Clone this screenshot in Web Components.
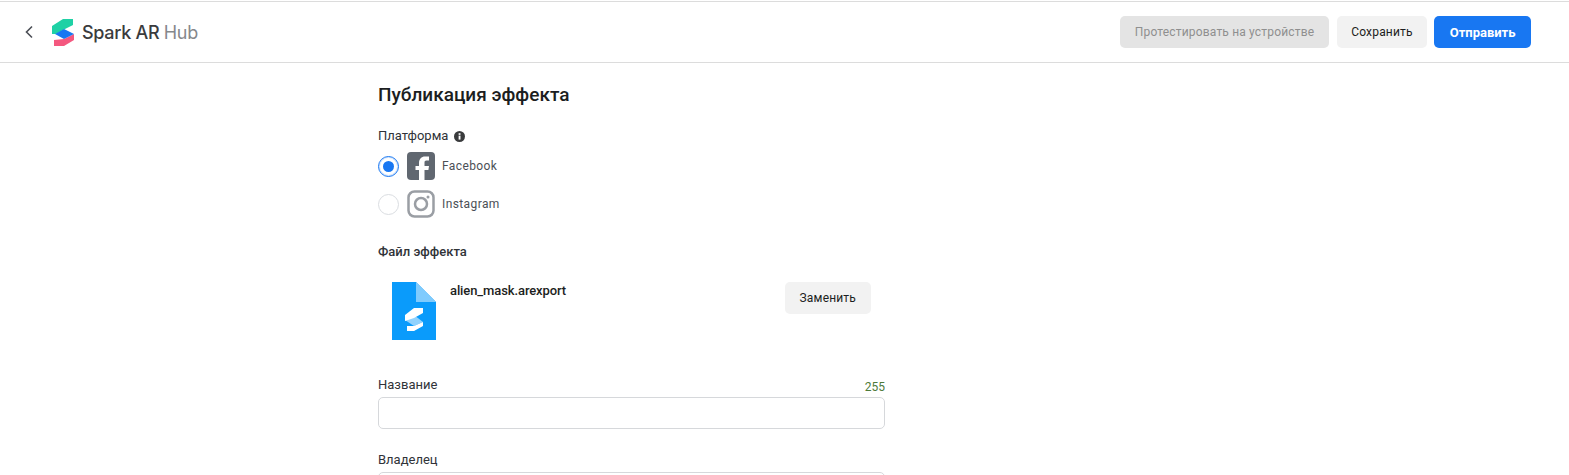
<!DOCTYPE html>
<html lang="ru">
<head>
<meta charset="utf-8">
<title>Spark AR Hub</title>
<style>
  html, body { margin: 0; height: 475px; overflow: hidden; background: #fff; }
  body { font-family: Roboto, "Liberation Sans", sans-serif; color: #1c1e21; }
</style>
</head>
<body>
<hub-header></hub-header>
<publish-form></publish-form>

<script>
// Small button used in the header and in the file row
class HubButton extends HTMLElement {
    constructor() {
        super();
        this.attachShadow({ mode: 'open' });
        this.shadowRoot.innerHTML = `
            <style>
                :host {
                    display: inline-flex;
                    align-items: center;
                    justify-content: center;
                    height: 32px;
                    padding: 0 14.5px;
                    border-radius: 5px;
                    background: #f2f2f2;
                    color: #1c1e21;
                    font-size: 12px;
                    letter-spacing: 0.17px;
                    white-space: nowrap;
                }
                :host([kind="disabled"]) { background: #e4e4e4; color: #8f8f8f; }
                :host([kind="primary"]) { background: #1877f2; color: #fff; font-weight: 700; font-size: 13px; letter-spacing: 0; padding: 0 15.5px; }
            </style>
            <slot></slot>
        `;
    }
}
customElements.define('hub-button', HubButton);

// Top bar with back arrow, logo and actions
class HubHeader extends HTMLElement {
    constructor() {
        super();
        this.attachShadow({ mode: 'open' });
        this.shadowRoot.innerHTML = `
            <style>
                :host {
                    display: flex;
                    align-items: center;
                    box-sizing: border-box;
                    height: 62px;
                    margin-top: 1px;
                    padding: 0 38px 0 24px;
                    border-top: 1px solid #dcdcdc;
                    border-bottom: 1px solid #dcdcdc;
                }
                .brand { display: flex; align-items: center; flex: 1; }
                .back { margin-right: 18px; }
                .logo { margin-right: 8px; }
                .name { font-family: Inter, Roboto, sans-serif; font-size: 18px; font-weight: 500; color: #3a3b3d; letter-spacing: -0.3px; }
                .name span { color: #85888c; font-weight: 400; }
                .actions { display: flex; gap: 7px; }
                .actions hub-button:first-child { margin-right: 1px; }
            </style>
            <div class="brand">
                <svg class="back" width="10" height="14" viewBox="0 0 10 14">
                    <path d="M8 1.5 2.5 7 8 12.5" fill="none" stroke="#4b4f56" stroke-width="1.6"/>
                </svg>
                <svg class="logo" width="22" height="27" viewBox="0 0 22 27">
                    <path d="M0 7 11 0H21V6L11 11 4 15H0z" fill="#1fd1a5"/>
                    <path d="M2 21 12 20 22 15V21L12 27H2z" fill="#f4587f"/>
                    <path d="M3 15 12 10 22 15 12 20z" fill="#1877f2"/>
                </svg>
                <span class="name">Spark AR <span>Hub</span></span>
            </div>
            <div class="actions">
                <hub-button kind="disabled">Протестировать на устройстве</hub-button>
                <hub-button>Сохранить</hub-button>
                <hub-button kind="primary">Отправить</hub-button>
            </div>
        `;
    }
}
customElements.define('hub-header', HubHeader);

// One radio row with a platform icon
class PlatformOption extends HTMLElement {
    constructor() {
        super();
        this.attachShadow({ mode: 'open' });
        this.shadowRoot.innerHTML = `
            <style>
                :host {
                    display: flex;
                    align-items: center;
                    height: 28px;
                    font-size: 12px;
                    letter-spacing: 0.4px;
                    color: #4b4f56;
                }
                .radio {
                    box-sizing: border-box;
                    width: 21px;
                    height: 21px;
                    border-radius: 50%;
                    border: 1px solid #dadde1;
                    margin-right: 8px;
                    display: flex;
                    align-items: center;
                    justify-content: center;
                }
                :host([checked]) .radio { border: 1.5px solid #1877f2; box-shadow: inset 0 0 0 1px #cfe2fc; }
                :host([checked]) .radio::after {
                    content: '';
                    width: 11px;
                    height: 11px;
                    border-radius: 50%;
                    background: #1877f2;
                }
                ::slotted(svg) { margin-right: 7px; }
            </style>
            <span class="radio"></span>
            <slot name="icon"></slot>
            <slot></slot>
        `;
    }
}
customElements.define('platform-option', PlatformOption);

// Label with optional counter and a text box
class TextField extends HTMLElement {
    constructor() {
        super();
        this.attachShadow({ mode: 'open' });
        this.shadowRoot.innerHTML = `
            <style>
                :host { display: block; width: 507px; }
                .top {
                    display: flex;
                    justify-content: space-between;
                    align-items: flex-end;
                    font-size: 13px;
                    line-height: 16px;
                    margin-bottom: 4px;
                    color: #303338;
                }
                .count { font-size: 12px; color: #4d7a3a; position: relative; top: 2px; }
                .box {
                    box-sizing: border-box;
                    height: 32px;
                    border: 1px solid #d6d8db;
                    border-radius: 5px;
                }
            </style>
            <div class="top"><slot></slot><span class="count"></span></div>
            <div class="box"></div>
        `;
    }

    connectedCallback() {
        this.shadowRoot.querySelector('.count').textContent = this.getAttribute('count') || '';
    }
}
customElements.define('text-field', TextField);

// Form column
class PublishForm extends HTMLElement {
    constructor() {
        super();
        this.attachShadow({ mode: 'open' });
        this.shadowRoot.innerHTML = `
            <style>
                :host {
                    display: block;
                    box-sizing: border-box;
                    width: 507px;
                    height: 412px;
                    overflow: hidden;
                    margin-left: 378px;
                    padding-top: 21px;
                }
                h1 { margin: 0; font-size: 19px; line-height: 22px; font-weight: 500; color: #1c1e21; }
                .label { display: flex; align-items: center; gap: 5px; font-size: 13px; line-height: 16px; color: #303338; }
                .platform { margin-top: 22px; margin-bottom: 8px; }
                .platform svg { margin-left: 1px; }
                platform-option + platform-option { margin-top: 10px; }
                .file-title { margin-top: 26px; font-weight: 500; }
                .file {
                    display: flex;
                    margin-top: 22px;
                    padding-left: 14px;
                    height: 60px;
                    margin-bottom: 35px;
                }
                .file-name { margin-left: 14px; padding-top: 1px; font-size: 13px; line-height: 16px; font-weight: 500; letter-spacing: -0.1px; flex: 1; }
                .file hub-button { margin-right: 14px; padding: 0 15px; }
                text-field + text-field { margin-top: 23px; }
            </style>
            <h1>Публикация эффекта</h1>
            <div class="label platform">Платформа
                <svg width="11" height="11" viewBox="0 0 10 10">
                    <circle cx="5" cy="5" r="5" fill="#3a3b3d"/>
                    <rect x="4.2" y="4.2" width="1.7" height="3.6" fill="#fff"/>
                    <rect x="4.2" y="2" width="1.7" height="1.5" fill="#fff"/>
                </svg>
            </div>
            <platform-option checked>
                <svg slot="icon" width="28" height="28" viewBox="0 0 28 28">
                    <rect width="28" height="28" rx="4" fill="#606770"/>
                    <path d="M12 28V18H8.500V14H12V11C12 7 14.500 4.500 18 4.500H22V8.500H19.500C18 8.500 17.500 9.200 17.500 10.500V14H22L21.400 18H17.500V28z" fill="#fff"/>
                </svg>
                Facebook
            </platform-option>
            <platform-option>
                <svg slot="icon" width="28" height="28" viewBox="0 0 28 28">
                    <rect x="1.500" y="1.500" width="25" height="25" rx="6" fill="none" stroke="#9a9ea4" stroke-width="2.500"/>
                    <circle cx="14" cy="14" r="6" fill="none" stroke="#9a9ea4" stroke-width="2.500"/>
                    <circle cx="21" cy="7" r="1.500" fill="#9a9ea4"/>
                </svg>
                Instagram
            </platform-option>
            <div class="label file-title">Файл эффекта</div>
            <div class="file">
                <svg width="44" height="58" viewBox="0 0 44 58">
                    <path d="M0 0H24L44 20V58H0z" fill="#0a9bfb"/>
                    <path d="M24 0 44 20H24z" fill="#7fcbfd"/>
                    <path d="M13 33 22 26H31V31L22 36 13 39z" fill="#fff"/>
                    <path d="M13 38 22 33 31 40 22 44z" fill="#fff" opacity=".55"/>
                    <path d="M15 44 22 44 31 40V44L22 49H15z" fill="#fff"/>
                </svg>
                <span class="file-name">alien_mask.arexport</span>
                <hub-button>Заменить</hub-button>
            </div>
            <text-field count="255">Название</text-field>
            <text-field>Владелец</text-field>
        `;
    }
}
customElements.define('publish-form', PublishForm);
</script>
</body>
</html>
